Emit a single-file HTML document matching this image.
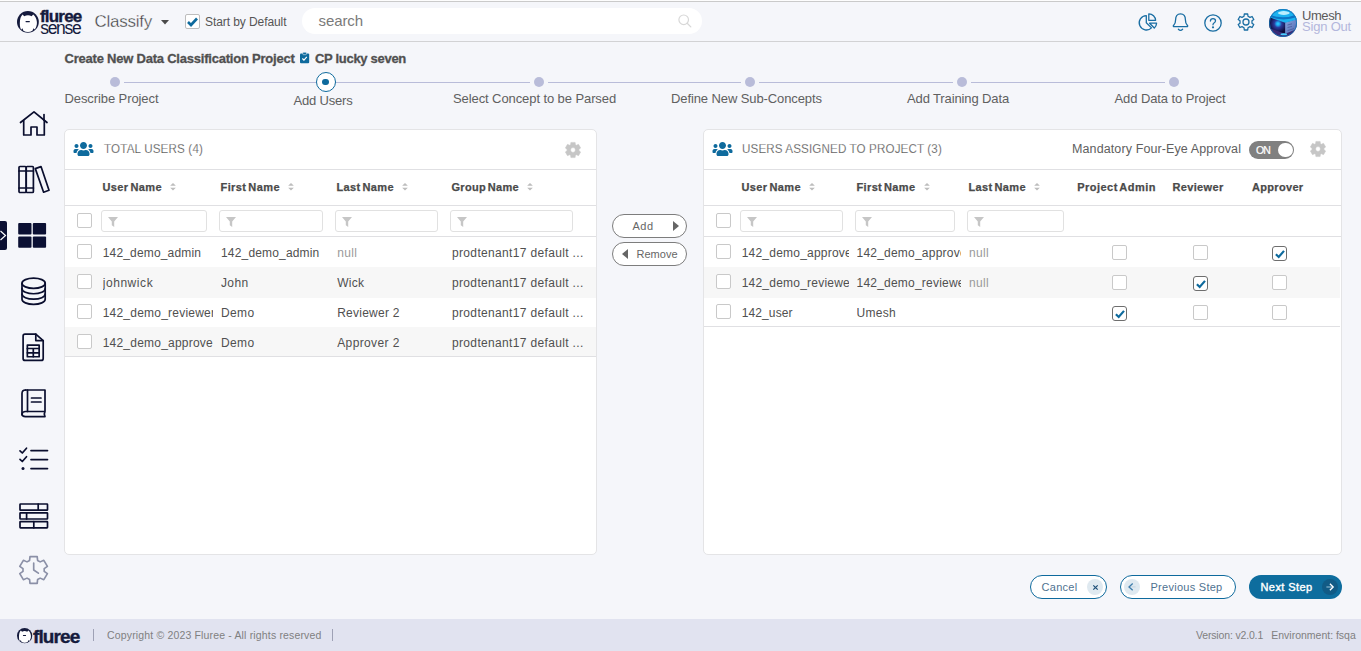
<!DOCTYPE html>
<html lang="en"><head><meta charset="utf-8"><title>Fluree Sense - Classify</title>
<style>
html,body{margin:0;padding:0}
body{width:1361px;height:651px;position:relative;overflow:hidden;background:#f5f6fa;font-family:"Liberation Sans",sans-serif}
.t{position:absolute;white-space:nowrap;line-height:20px}
.a{position:absolute}
svg{position:absolute;overflow:visible}
.panel{position:absolute;box-sizing:border-box;background:#fff;border:1px solid #e4e4e6;border-radius:5px}
.hl{position:absolute;height:1px;background:#e0e0e3}
.row{position:absolute;height:30px}
.alt{background:#f7f7f7}
.cb{position:absolute;box-sizing:border-box;width:15px;height:15px;border:1px solid #c9c9c9;border-radius:2px;background:#fff}
.cb.on{border:1.5px solid #6e6e6e;border-radius:3px}
.fi{position:absolute;box-sizing:border-box;height:22px;border:1px solid #e1e1e1;border-radius:3px;background:#fff}
.dot{position:absolute;width:10px;height:10px;border-radius:50%;background:#b9bcd9}
.sl{position:absolute;height:1px;top:82px;background:#b9bcd9}
.pill{position:absolute;box-sizing:border-box;height:24px;border-radius:12px;background:#fff}
.ic{stroke:#0a0e2e;fill:none;stroke-width:1.7;stroke-linecap:round;stroke-linejoin:round}
.hi{stroke:#1a6ea3;fill:none;stroke-width:1.3;stroke-linecap:round;stroke-linejoin:round}

</style></head>
<body>
<!-- header -->
<div class="a" style="left:0;top:0;width:1361px;height:1px;background:#fdfdfd"></div>
<div class="a" style="left:0;top:1px;width:1361px;height:1px;background:#cacaca"></div>
<div class="a" style="left:0;top:41px;width:1361px;height:1px;background:#d2d2d4"></div>
<!-- logo -->
<svg style="left:17px;top:11.3px" width="22" height="22" viewBox="0 0 22 22"><circle cx="10.9" cy="10.9" r="10.9" fill="#151b3d"/><path d="M3 9.5 C3.2 7 4.2 5.2 5.6 3.6 L7.2 5.2 C9.6 4 12.4 4 14.6 5.2 L16.2 3.6 C18.4 5.6 19.6 8 19.9 11 C20.2 14 19 17 17.6 18.6 L16.6 17.2 L15.4 19.8 C12.6 21.4 9.2 21.4 6.4 19.8 L5.4 17.2 L4.2 18.8 C2.8 17 2.6 13 3 9.5Z" fill="#fff"/><rect x="8.5" y="10" width="4.4" height="1.2" rx="0.4" fill="#151b3d"/></svg>
<!-- caret -->
<svg style="left:160.8px;top:19.8px" width="8" height="5" viewBox="0 0 8 5"><path d="M0 0H8L4 4.5Z" fill="#4a4a4a"/></svg>
<!-- start by default checkbox -->
<div class="cb" style="left:185px;top:14px;border-color:#bdbdbd"></div>
<svg style="left:187px;top:17px" width="11" height="9" viewBox="0 0 11 9"><path d="M1 5 L4 8 L10 1.5" fill="none" stroke="#0e6a9d" stroke-width="2.6"/></svg>
<!-- search -->
<div class="a" style="left:302px;top:8px;width:400px;height:26px;border-radius:13px;background:#fff"></div>
<svg style="left:678px;top:14.4px" width="14" height="14" viewBox="0 0 14 14"><circle cx="5.7" cy="5.8" r="4.8" fill="none" stroke="#d8d8d8" stroke-width="1.2"/><path d="M9.2 9.3L12.8 12.9" stroke="#d8d8d8" stroke-width="1.3" stroke-linecap="round"/></svg>
<!-- header icons -->
<svg style="left:1138px;top:13px" width="20" height="19" viewBox="0 0 20 19"><path class="hi" d="M8.3 2.6 A7.2 7.2 0 1 0 13.5 14.9 L8.3 9.8Z"/><path class="hi" d="M10.8 7.3 V0.8 A6.7 6.7 0 0 1 17.6 7.3Z"/><path class="hi" d="M11.6 10.2 H18.6 Q18.4 13 16.3 15Z"/></svg>
<svg style="left:1172px;top:13px" width="17" height="19" viewBox="0 0 17 19"><path class="hi" d="M8.5 0.9 C5 0.9 3.6 3.8 3.6 6.8 C3.6 9.8 2.9 11.2 1.7 12.3 Q0.9 13.1 1.7 13.7 H15.3 Q16.1 13.1 15.3 12.3 C14.1 11.2 13.4 9.8 13.4 6.8 C13.4 3.8 12 0.9 8.5 0.9Z"/><path class="hi" d="M6.4 16.2 Q8.5 18.4 10.6 16.2"/></svg>
<svg style="left:1203.8px;top:13.5px" width="18" height="18" viewBox="0 0 18 18"><circle class="hi" cx="9" cy="9" r="8.2"/><path class="hi" d="M6.4 7 Q6.5 4.6 9 4.6 Q11.5 4.6 11.5 6.8 Q11.5 8.2 10 9 Q9 9.6 9 10.8" stroke-width="1.8"/><circle cx="9" cy="13.3" r="1.1" fill="#1a6ea3"/></svg>
<svg style="left:1236.6px;top:13.2px" width="18" height="18" viewBox="0 0 18 18"><path class="hi" stroke-width="1.4" d="M10.99 3.23 L10.70 0.98 L7.30 0.98 L7.01 3.23 L5.00 4.40 L2.91 3.51 L1.20 6.47 L3.01 7.84 L3.01 10.16 L1.20 11.53 L2.91 14.49 L5.00 13.60 L7.01 14.77 L7.30 17.02 L10.70 17.02 L10.99 14.77 L13.00 13.60 L15.09 14.49 L16.80 11.53 L14.99 10.16 L14.99 7.84 L16.80 6.47 L15.09 3.51 L13.00 4.40Z"/><circle class="hi" stroke-width="1.4" cx="9" cy="9" r="3"/></svg>
<!-- avatar -->
<svg style="left:1269.1px;top:8.8px" width="28" height="28" viewBox="0 0 28 28"><defs><radialGradient id="avg" cx="9" cy="14.8" r="9" gradientUnits="userSpaceOnUse"><stop offset="0" stop-color="#2fd0ff"/><stop offset="0.18" stop-color="#1fa8f0"/><stop offset="0.42" stop-color="#2b3b9c"/><stop offset="1" stop-color="#0d0b3a"/></radialGradient><linearGradient id="avr" x1="0" y1="0" x2="1" y2="1"><stop offset="0" stop-color="#86a8e2"/><stop offset="1" stop-color="#5265ae"/></linearGradient><clipPath id="avc"><circle cx="14" cy="14" r="14"/></clipPath></defs><g clip-path="url(#avc)"><rect width="28" height="28" fill="#3a2a76"/><path d="M0 7 L16.2 13.4 V24.8 L0 19Z" fill="url(#avg)"/><path d="M16.2 13.4 L28 10 V20 L16.2 24.8Z" fill="url(#avr)"/><path d="M0 0 H28 V10.4 L16.2 13.8 L0 8.2Z" fill="#1cb2f0"/><path d="M0 5.5 Q14 11 28 5.5 V8 Q14 13 0 7.6Z" fill="#0d74c4"/><ellipse cx="14.8" cy="4" rx="5.8" ry="1.9" fill="#b9eefe"/><path d="M18.5 16 L23 14.8 M18.5 18.6 L23 17.4 M18.5 21.6 L25 19.6" stroke="#4a5a9c" stroke-width="0.8" fill="none"/><ellipse cx="14.8" cy="25.3" rx="3.3" ry="1" fill="#49d0ff"/></g><circle cx="14" cy="14" r="13.6" fill="none" stroke="#0e74b6" stroke-width="0.8"/></svg>
<!-- sidebar -->
<div class="a" style="left:0;top:221px;width:7px;height:29px;background:#0b1033;border-radius:0 2px 2px 0"></div>
<svg style="left:0;top:230px" width="7" height="11" viewBox="0 0 7 11"><path d="M0.5 1 L5.5 5.5 L0.5 10" fill="none" stroke="#fff" stroke-width="1.2"/></svg>
<svg style="left:19px;top:110px" width="30" height="27" viewBox="0 0 30 27"><path class="ic" d="M1.5 12.5 L15 1.8 L28 12.5"/><path class="ic" d="M25 10 V4.5"/><path class="ic" d="M4.7 10.5 V25 H12 V17 H18 V25 H25.3 V10.5"/></svg>
<svg style="left:18px;top:165px" width="32" height="29" viewBox="0 0 32 29"><rect class="ic" x="1" y="1.5" width="7.2" height="26" rx="1"/><rect class="ic" x="8.2" y="1.5" width="7.2" height="26" rx="1"/><path class="ic" d="M1 6 H15.4 M1 23 H15.4"/><path class="ic" d="M17.3 3.6 L23 1.6 L31 25.2 L25.6 27.2Z"/></svg>
<svg style="left:18px;top:223px" width="29" height="25" viewBox="0 0 29 25"><rect x="0.2" y="0" width="13.3" height="11.6" rx="1" fill="#0b1033"/><rect x="14.8" y="0" width="13.3" height="11.6" rx="1" fill="#0b1033"/><rect x="0.2" y="13.4" width="13.3" height="11.4" rx="1" fill="#0b1033"/><rect x="14.8" y="13.4" width="13.3" height="11.4" rx="1" fill="#0b1033"/></svg>
<svg style="left:21px;top:277px" width="26" height="29" viewBox="0 0 26 29"><ellipse class="ic" cx="12.6" cy="6.25" rx="11.6" ry="5.1"/><path class="ic" d="M1 6.25 V22.25 A11.6 5.1 0 0 0 24.2 22.25 V6.25"/><path class="ic" d="M1 11.65 A11.6 5.1 0 0 0 24.2 11.65"/><path class="ic" d="M1 17.05 A11.6 5.1 0 0 0 24.2 17.05"/></svg>
<svg style="left:22px;top:333px" width="23" height="29" viewBox="0 0 23 29"><path class="ic" d="M3 1.1 H13.8 L21.2 7.6 V25.4 Q21.2 27.4 19.2 27.4 H3.1 Q1.1 27.4 1.1 25.4 V3.1 Q1.1 1.1 3 1.1Z"/><path class="ic" d="M13.8 1.1 V7.6 H21.2"/><rect class="ic" x="5.35" y="12.05" width="11.8" height="11.7"/><path class="ic" stroke-width="1.5" d="M5.35 15.5 H17.15 M5.35 19.8 H17.15 M11.3 15.5 V23.75"/></svg>
<svg style="left:21px;top:389px" width="26" height="29" viewBox="0 0 26 29"><path class="ic" d="M4.5 1 H24 V22.5 H4.5 C2.5 22.5 1 24 1 25.3 C1 26.8 2.5 27.6 4.5 27.6 H24 Q22.6 25 24 22.5"/><path class="ic" d="M1 25.5 V4.5 C1 2.5 2.5 1 4.5 1"/><path class="ic" d="M6.5 1 V22.5"/><path class="ic" d="M10.5 9 H20 M10.5 13 H20"/></svg>
<svg style="left:18.5px;top:447px" width="30" height="24" viewBox="0 0 30 24"><path class="ic" d="M1 3.8 L3.3 6 L7.5 1.2 M1 12.3 L3.3 14.5 L7.5 9.7"/><path class="ic" d="M12 3.6 H28.5 M12 12.6 H28.5 M12 21.6 H28.5"/><circle cx="4" cy="21.6" r="1.5" fill="#0d1033"/></svg>
<svg style="left:18.5px;top:503px" width="30" height="26" viewBox="0 0 30 26"><rect class="ic" x="1" y="1" width="27.5" height="6.2" rx="0.5"/><rect class="ic" x="1" y="9.8" width="27.5" height="6.2" rx="0.5"/><rect class="ic" x="1" y="18.6" width="27.5" height="6.2" rx="0.5"/><path class="ic" d="M19.2 1 V7.2 M7.6 9.8 V16 M14.8 18.6 V24.8"/></svg>
<svg style="left:17.9px;top:555.3px" width="31.2" height="30" viewBox="0 0 30 30" preserveAspectRatio="none"><path d="M18.86 5.45 L18.46 1.64 L11.54 1.64 L11.14 5.45 L8.66 6.88 L5.16 5.33 L1.70 11.31 L4.80 13.57 L4.80 16.43 L1.70 18.69 L5.16 24.67 L8.66 23.12 L11.14 24.55 L11.54 28.36 L18.46 28.36 L18.86 24.55 L21.34 23.12 L24.84 24.67 L28.30 18.69 L25.20 16.43 L25.20 13.57 L28.30 11.31 L24.84 5.33 L21.34 6.88Z" fill="none" stroke="#8b90a7" stroke-width="1.6" stroke-linejoin="round"/><path d="M15.1 8 V15 L19.6 18.2" fill="none" stroke="#8b90a7" stroke-width="1.6" stroke-linecap="round" stroke-linejoin="round"/></svg>
<!-- title clipboard -->
<svg style="left:299.9px;top:52.2px" width="9.2" height="11.6" viewBox="0 0 10 12"><rect x="0" y="1.2" width="10" height="10.8" rx="1.2" fill="#0e6a9d"/><rect x="3" y="0" width="4" height="2.6" rx="0.8" fill="#0e6a9d" stroke="#f5f6fa" stroke-width="0.6"/><path d="M2.6 6.8 L4.3 8.5 L7.4 5" fill="none" stroke="#fff" stroke-width="1.3"/></svg>
<!-- stepper -->
<div class="sl" style="left:124px;width:192px"></div>
<div class="sl" style="left:335px;width:195px"></div>
<div class="sl" style="left:548px;width:193px"></div>
<div class="sl" style="left:759px;width:194px"></div>
<div class="sl" style="left:971px;width:194px"></div>
<div class="dot" style="left:110px;top:77px"></div>
<div class="dot" style="left:534px;top:77px"></div>
<div class="dot" style="left:745px;top:77px"></div>
<div class="dot" style="left:957px;top:77px"></div>
<div class="dot" style="left:1169px;top:77px"></div>
<div class="a" style="left:315.5px;top:72px;width:20px;height:20px;box-sizing:border-box;border:1.6px solid #0e6a9d;border-radius:50%;background:#fff"></div>
<div class="a" style="left:322.2px;top:78.7px;width:6.6px;height:6.6px;border-radius:50%;background:#0e6a9d"></div>
<div class="a" style="left:0;top:619px;width:1361px;height:32px;background:#e1e3f0"></div>
<svg style="left:16.6px;top:628.2px" width="15.4" height="15.4" viewBox="0 0 22 22"><circle cx="10.9" cy="10.9" r="10.9" fill="#151b3d"/><path d="M3 9.5 C3.2 7 4.2 5.2 5.6 3.6 L7.2 5.2 C9.6 4 12.4 4 14.6 5.2 L16.2 3.6 C18.4 5.6 19.6 8 19.9 11 C20.2 14 19 17 17.6 18.6 L16.6 17.2 L15.4 19.8 C12.6 21.4 9.2 21.4 6.4 19.8 L5.4 17.2 L4.2 18.8 C2.8 17 2.6 13 3 9.5Z" fill="#fff"/><rect x="8.5" y="10" width="4.4" height="1.3" rx="0.4" fill="#151b3d"/></svg>
<div class="a" style="left:93px;top:629px;width:1px;height:12px;background:#9ea1b5"></div>
<div class="a" style="left:332px;top:629px;width:1px;height:12px;background:#9ea1b5"></div>
<div class="panel" style="left:64px;top:129px;width:533px;height:426px"></div>
<div class="row alt" style="left:65px;top:267px;width:531px;height:30.8px"></div>
<div class="row alt" style="left:65px;top:327.3px;width:531px;height:28.7px"></div>
<div class="hl" style="left:65px;top:169px;width:531px"></div>
<div class="hl" style="left:65px;top:205px;width:531px"></div>
<div class="hl" style="left:65px;top:236px;width:531px"></div>
<div class="hl" style="left:65px;top:356px;width:531px"></div>
<svg style="left:73px;top:142px" width="21" height="14" viewBox="0 0 640 448"><path fill="#0e6a9d" d="M96 192c35.300 0 64-28.700 64-64s-28.700-64-64-64-64 28.700-64 64 28.700 64 64 64zm448 0c35.300 0 64-28.700 64-64s-28.700-64-64-64-64 28.700-64 64 28.700 64 64 64zm32 32h-64c-17.600 0-33.500 7.100-45.100 18.600 40.300 22.100 68.900 62 75.100 109.400h66c17.700 0 32-14.300 32-32v-32c0-35.300-28.700-64-64-64zm-256 0c61.900 0 112-50.100 112-112S381.900 0 320 0 208 50.100 208 112s50.100 112 112 112zm76.800 32h-8.300c-20.800 10-43.900 16-68.500 16s-47.600-6-68.500-16h-8.300C179.600 256 128 307.600 128 371.200V400c0 26.500 21.500 48 48 48h288c26.500 0 48-21.500 48-48v-28.800c0-63.600-51.600-115.200-115.200-115.200zm-223.700-13.400C161.500 231.100 145.600 224 128 224H64c-35.300 0-64 28.700-64 64v32c0 17.700 14.300 32 32 32h65.900c6.300-47.400 34.900-87.300 75.200-109.400z"/></svg>
<svg style="left:564.7px;top:141.9px" width="16" height="16" viewBox="0 0 16 16"><path fill="#c6c6c6" fill-rule="evenodd" stroke="#c6c6c6" stroke-width="0.5" stroke-linejoin="round" d="M10.49 2.65 L10.11 0.39 L5.89 0.39 L5.51 2.65 L4.62 3.17 L2.46 2.37 L0.35 6.02 L2.12 7.49 L2.12 8.51 L0.35 9.98 L2.46 13.63 L4.62 12.83 L5.51 13.35 L5.89 15.61 L10.11 15.61 L10.49 13.35 L11.38 12.83 L13.54 13.63 L15.65 9.98 L13.88 8.51 L13.88 7.49 L15.65 6.02 L13.54 2.37 L11.38 3.17Z M8 5.6 A2.4 2.4 0 1 0 8 10.4 A2.4 2.4 0 1 0 8 5.6Z"/></svg>
<svg style="left:170.2px;top:183.2px" width="6" height="7.6" viewBox="0 0 6 8"><path d="M0 3 L3 0 L6 3Z M0 5 L3 8 L6 5Z" fill="#bdbdbd"/></svg>
<svg style="left:288.2px;top:183.2px" width="6" height="7.6" viewBox="0 0 6 8"><path d="M0 3 L3 0 L6 3Z M0 5 L3 8 L6 5Z" fill="#bdbdbd"/></svg>
<svg style="left:402.2px;top:183.2px" width="6" height="7.6" viewBox="0 0 6 8"><path d="M0 3 L3 0 L6 3Z M0 5 L3 8 L6 5Z" fill="#bdbdbd"/></svg>
<svg style="left:527.2px;top:183.2px" width="6" height="7.6" viewBox="0 0 6 8"><path d="M0 3 L3 0 L6 3Z M0 5 L3 8 L6 5Z" fill="#bdbdbd"/></svg>
<div class="cb" style="left:77px;top:213px"></div>
<div class="fi" style="left:101px;top:210px;width:106px"></div>
<svg style="left:108px;top:217px" width="10" height="10" viewBox="0 0 10 10"><path d="M0 0 H10 L6.2 4.6 V10 L3.8 8.2 V4.6Z" fill="#c6c6c6"/></svg>
<div class="fi" style="left:219px;top:210px;width:104px"></div>
<svg style="left:226px;top:217px" width="10" height="10" viewBox="0 0 10 10"><path d="M0 0 H10 L6.2 4.6 V10 L3.8 8.2 V4.6Z" fill="#c6c6c6"/></svg>
<div class="fi" style="left:335px;top:210px;width:103px"></div>
<svg style="left:342px;top:217px" width="10" height="10" viewBox="0 0 10 10"><path d="M0 0 H10 L6.2 4.6 V10 L3.8 8.2 V4.6Z" fill="#c6c6c6"/></svg>
<div class="fi" style="left:450px;top:210px;width:123px"></div>
<svg style="left:457px;top:217px" width="10" height="10" viewBox="0 0 10 10"><path d="M0 0 H10 L6.2 4.6 V10 L3.8 8.2 V4.6Z" fill="#c6c6c6"/></svg>
<div class="cb" style="left:77px;top:244px"></div>
<div class="cb" style="left:77px;top:274px"></div>
<div class="cb" style="left:77px;top:304px"></div>
<div class="cb" style="left:77px;top:334px"></div>
<div class="panel" style="left:703px;top:129px;width:639px;height:426px"></div>
<div class="row alt" style="left:704px;top:267px;width:636px;height:30.8px"></div>
<div class="hl" style="left:704px;top:169px;width:637px"></div>
<div class="hl" style="left:704px;top:205px;width:637px"></div>
<div class="hl" style="left:704px;top:236px;width:637px"></div>
<div class="hl" style="left:704px;top:326px;width:636px"></div>
<svg style="left:712px;top:142px" width="21" height="14" viewBox="0 0 640 448"><path fill="#0e6a9d" d="M96 192c35.300 0 64-28.700 64-64s-28.700-64-64-64-64 28.700-64 64 28.700 64 64 64zm448 0c35.300 0 64-28.700 64-64s-28.700-64-64-64-64 28.700-64 64 28.700 64 64 64zm32 32h-64c-17.600 0-33.500 7.100-45.100 18.600 40.300 22.100 68.900 62 75.100 109.400h66c17.700 0 32-14.300 32-32v-32c0-35.300-28.700-64-64-64zm-256 0c61.900 0 112-50.100 112-112S381.900 0 320 0 208 50.100 208 112s50.100 112 112 112zm76.800 32h-8.300c-20.800 10-43.900 16-68.500 16s-47.600-6-68.500-16h-8.300C179.600 256 128 307.600 128 371.200V400c0 26.500 21.500 48 48 48h288c26.500 0 48-21.500 48-48v-28.800c0-63.600-51.600-115.200-115.200-115.200zm-223.700-13.400C161.500 231.100 145.600 224 128 224H64c-35.300 0-64 28.700-64 64v32c0 17.700 14.300 32 32 32h65.900c6.300-47.400 34.900-87.300 75.200-109.400z"/></svg>
<svg style="left:1310.1px;top:140.9px" width="16" height="16" viewBox="0 0 16 16"><path fill="#c6c6c6" fill-rule="evenodd" stroke="#c6c6c6" stroke-width="0.5" stroke-linejoin="round" d="M10.49 2.65 L10.11 0.39 L5.89 0.39 L5.51 2.65 L4.62 3.17 L2.46 2.37 L0.35 6.02 L2.12 7.49 L2.12 8.51 L0.35 9.98 L2.46 13.63 L4.62 12.83 L5.51 13.35 L5.89 15.61 L10.11 15.61 L10.49 13.35 L11.38 12.83 L13.54 13.63 L15.65 9.98 L13.88 8.51 L13.88 7.49 L15.65 6.02 L13.54 2.37 L11.38 3.17Z M8 5.6 A2.4 2.4 0 1 0 8 10.4 A2.4 2.4 0 1 0 8 5.6Z"/></svg>
<div class="a" style="left:1249px;top:141px;width:45px;height:18px;border-radius:9px;background:#808080"></div>
<div class="a" style="left:1277.8px;top:142.7px;width:14.8px;height:14.8px;border-radius:50%;background:#fff"></div>
<svg style="left:809.4px;top:183.2px" width="6" height="7.6" viewBox="0 0 6 8"><path d="M0 3 L3 0 L6 3Z M0 5 L3 8 L6 5Z" fill="#bdbdbd"/></svg>
<svg style="left:924.4px;top:183.2px" width="6" height="7.6" viewBox="0 0 6 8"><path d="M0 3 L3 0 L6 3Z M0 5 L3 8 L6 5Z" fill="#bdbdbd"/></svg>
<svg style="left:1034.3px;top:183.2px" width="6" height="7.6" viewBox="0 0 6 8"><path d="M0 3 L3 0 L6 3Z M0 5 L3 8 L6 5Z" fill="#bdbdbd"/></svg>
<div class="cb" style="left:716px;top:213px"></div>
<div class="fi" style="left:740px;top:210px;width:103px"></div>
<svg style="left:747px;top:217px" width="10" height="10" viewBox="0 0 10 10"><path d="M0 0 H10 L6.2 4.6 V10 L3.8 8.2 V4.6Z" fill="#c6c6c6"/></svg>
<div class="fi" style="left:855px;top:210px;width:100px"></div>
<svg style="left:862px;top:217px" width="10" height="10" viewBox="0 0 10 10"><path d="M0 0 H10 L6.2 4.6 V10 L3.8 8.2 V4.6Z" fill="#c6c6c6"/></svg>
<div class="fi" style="left:967px;top:210px;width:97px"></div>
<svg style="left:974px;top:217px" width="10" height="10" viewBox="0 0 10 10"><path d="M0 0 H10 L6.2 4.6 V10 L3.8 8.2 V4.6Z" fill="#c6c6c6"/></svg>
<div class="cb" style="left:716px;top:244px"></div>
<div class="cb" style="left:1112px;top:245px"></div>
<div class="cb" style="left:1193px;top:245px"></div>
<div class="cb on" style="left:1272px;top:246px"></div>
<svg style="left:1274.5px;top:249.6px" width="10" height="8" viewBox="0 0 10 8"><path d="M0.9 4.3 L3.7 7 L9 0.9" fill="none" stroke="#0e6a9d" stroke-width="2.2"/></svg>
<div class="cb" style="left:716px;top:274px"></div>
<div class="cb" style="left:1112px;top:275px"></div>
<div class="cb on" style="left:1193px;top:276px"></div>
<svg style="left:1195.5px;top:279.6px" width="10" height="8" viewBox="0 0 10 8"><path d="M0.9 4.3 L3.7 7 L9 0.9" fill="none" stroke="#0e6a9d" stroke-width="2.2"/></svg>
<div class="cb" style="left:1272px;top:275px"></div>
<div class="cb" style="left:716px;top:304px"></div>
<div class="cb on" style="left:1112px;top:306px"></div>
<svg style="left:1114.5px;top:309.6px" width="10" height="8" viewBox="0 0 10 8"><path d="M0.9 4.3 L3.7 7 L9 0.9" fill="none" stroke="#0e6a9d" stroke-width="2.2"/></svg>
<div class="cb" style="left:1193px;top:305px"></div>
<div class="cb" style="left:1272px;top:305px"></div>
<div class="pill" style="left:612px;top:214px;width:75px;border:1px solid #7d7d7d"></div>
<div class="pill" style="left:612px;top:242px;width:75px;border:1px solid #7d7d7d"></div>
<svg style="left:673px;top:221px" width="6" height="10" viewBox="0 0 6 10"><path d="M0 0 L6 5 L0 10Z" fill="#666"/></svg>
<svg style="left:622px;top:249px" width="6" height="10" viewBox="0 0 6 10"><path d="M6 0 L0 5 L6 10Z" fill="#666"/></svg>
<div class="pill" style="left:1030px;top:575px;width:77px;border:1.3px solid #0e6a9d"></div>
<div class="a" style="left:1087px;top:579px;width:16px;height:16px;border-radius:50%;background:#dfe9f0"></div>
<svg style="left:1092.5px;top:584.5px" width="5" height="5" viewBox="0 0 5 5"><path d="M0.3 0.3 L4.7 4.7 M4.7 0.3 L0.3 4.7" stroke="#1d4f78" stroke-width="1.2"/></svg>
<div class="pill" style="left:1120px;top:575px;width:116px;border:1.3px solid #0e6a9d"></div>
<div class="a" style="left:1124px;top:579px;width:16px;height:16px;border-radius:50%;background:#dfe9f0"></div>
<svg style="left:1128.4px;top:583px" width="9" height="8" viewBox="0 0 9 8"><path d="M1 3.9 H7.6" fill="none" stroke="#c5d5e0" stroke-width="1"/><path d="M4.7 0.6 L1 3.9 L4.7 7.2" fill="none" stroke="#3f7dab" stroke-width="1.3"/></svg>
<div class="pill" style="left:1249px;top:575px;width:93px;background:#0e6d9e"></div>
<div class="a" style="left:1322px;top:579px;width:16px;height:16px;border-radius:50%;background:#115b86"></div>
<svg style="left:1326px;top:583px" width="8" height="8" viewBox="0 0 8 8"><path d="M0.4 4 H6.6" fill="none" stroke="#86b4cb" stroke-width="1.2"/><path d="M3.9 0.7 L7.2 4 L3.9 7.3" fill="none" stroke="#fff" stroke-width="1.3"/></svg>
<span class="t" style="left:94.5px;top:11.5px;font-size:17px;color:#3c3c3c;letter-spacing:-0.25px;-webkit-text-stroke:0.35px #f5f6fa;">Classify</span>
<span class="t" style="left:205px;top:11.8px;font-size:12px;color:#555;letter-spacing:-0.08px;">Start by Default</span>
<span class="t" style="left:318.5px;top:10.8px;font-size:15px;color:#7a7a7a;letter-spacing:-0.09px;">search</span>
<span class="t" style="left:1302px;top:5.5px;font-size:13px;color:#5a5a5a;letter-spacing:-0.44px;">Umesh</span>
<span class="t" style="left:1302px;top:17.3px;font-size:13px;color:#b3b7dc;letter-spacing:-0.2px;">Sign Out</span>
<span class="t" style="left:64.5px;top:49px;font-size:13px;font-weight:700;color:#505050;letter-spacing:-0.22px;-webkit-text-stroke:0.3px currentColor;">Create New Data Classification Project</span>
<span class="t" style="left:315px;top:49px;font-size:13px;font-weight:700;color:#505050;letter-spacing:-0.3px;-webkit-text-stroke:0.3px currentColor;">CP lucky seven</span>
<span class="t" style="left:64.5px;top:88.8px;font-size:13px;color:#606060;letter-spacing:-0.09px;">Describe Project</span>
<span class="t" style="left:293.5px;top:90.8px;font-size:13px;color:#606060;letter-spacing:-0.19px;">Add Users</span>
<span class="t" style="left:453px;top:88.8px;font-size:13px;color:#606060;letter-spacing:-0.09px;">Select Concept to be Parsed</span>
<span class="t" style="left:671px;top:88.8px;font-size:13px;color:#606060;letter-spacing:-0.1px;">Define New Sub-Concepts</span>
<span class="t" style="left:907px;top:88.8px;font-size:13px;color:#606060;letter-spacing:-0.12px;">Add Training Data</span>
<span class="t" style="left:1114.5px;top:88.8px;font-size:13px;color:#606060;letter-spacing:-0.09px;">Add Data to Project</span>
<span class="t" style="left:103.5px;top:138.7px;font-size:12.5px;color:#484848;letter-spacing:0.17px;-webkit-text-stroke:0.25px #fff;transform:scaleX(0.93);transform-origin:0 50%;">TOTAL USERS (4)</span>
<span class="t" style="left:102.5px;top:177.2px;font-size:11px;font-weight:700;color:#4a4a4a;letter-spacing:0.39px;-webkit-text-stroke:0.25px currentColor;word-spacing:-1.5px;">User Name</span>
<span class="t" style="left:220.5px;top:177.2px;font-size:11px;font-weight:700;color:#4a4a4a;letter-spacing:0.41px;-webkit-text-stroke:0.25px currentColor;word-spacing:-1.5px;">First Name</span>
<span class="t" style="left:336.5px;top:177.2px;font-size:11px;font-weight:700;color:#4a4a4a;letter-spacing:0.37px;-webkit-text-stroke:0.25px currentColor;word-spacing:-1.5px;">Last Name</span>
<span class="t" style="left:451.5px;top:177.2px;font-size:11px;font-weight:700;color:#4a4a4a;letter-spacing:0.3px;-webkit-text-stroke:0.25px currentColor;word-spacing:-1.5px;">Group Name</span>
<span class="t" style="left:102.7px;top:242.6px;font-size:12px;color:#505050;letter-spacing:0.17px;width:110px;overflow:hidden;">142_demo_admin</span>
<span class="t" style="left:221px;top:242.6px;font-size:12px;color:#505050;letter-spacing:0.17px;width:108px;overflow:hidden;">142_demo_admin</span>
<span class="t" style="left:337.2px;top:242.6px;font-size:12px;color:#9a9a9a;letter-spacing:0.33px;width:108px;overflow:hidden;">null</span>
<span class="t" style="left:452px;top:242.6px;font-size:12px;color:#505050;letter-spacing:0.34px;">prodtenant17 default ...</span>
<span class="t" style="left:102.7px;top:272.6px;font-size:12px;color:#505050;letter-spacing:0.56px;width:110px;overflow:hidden;">johnwick</span>
<span class="t" style="left:221px;top:272.6px;font-size:12px;color:#505050;letter-spacing:0.37px;width:108px;overflow:hidden;">John</span>
<span class="t" style="left:337.2px;top:272.6px;font-size:12px;color:#505050;letter-spacing:0.25px;width:108px;overflow:hidden;">Wick</span>
<span class="t" style="left:452px;top:272.6px;font-size:12px;color:#505050;letter-spacing:0.34px;">prodtenant17 default ...</span>
<span class="t" style="left:102.7px;top:302.6px;font-size:12px;color:#505050;letter-spacing:0.22px;width:110px;overflow:hidden;">142_demo_reviewer</span>
<span class="t" style="left:221px;top:302.6px;font-size:12px;color:#505050;letter-spacing:0.37px;width:108px;overflow:hidden;">Demo</span>
<span class="t" style="left:337.2px;top:302.6px;font-size:12px;color:#505050;letter-spacing:0.25px;width:108px;overflow:hidden;">Reviewer 2</span>
<span class="t" style="left:452px;top:302.6px;font-size:12px;color:#505050;letter-spacing:0.34px;">prodtenant17 default ...</span>
<span class="t" style="left:102.7px;top:332.6px;font-size:12px;color:#505050;letter-spacing:0.22px;width:110px;overflow:hidden;">142_demo_approver</span>
<span class="t" style="left:221px;top:332.6px;font-size:12px;color:#505050;letter-spacing:0.37px;width:108px;overflow:hidden;">Demo</span>
<span class="t" style="left:337.2px;top:332.6px;font-size:12px;color:#505050;letter-spacing:0.38px;width:108px;overflow:hidden;">Approver 2</span>
<span class="t" style="left:452px;top:332.6px;font-size:12px;color:#505050;letter-spacing:0.34px;">prodtenant17 default ...</span>
<span class="t" style="left:742px;top:138.7px;font-size:12.5px;color:#484848;letter-spacing:0.13px;-webkit-text-stroke:0.25px #fff;transform:scaleX(0.93);transform-origin:0 50%;">USERS ASSIGNED TO PROJECT (3)</span>
<span class="t" style="left:1072px;top:139px;font-size:12.5px;color:#606060;letter-spacing:0.11px;">Mandatory Four-Eye Approval</span>
<span class="t" style="left:1256px;top:140px;font-size:10.5px;color:#fff;letter-spacing:-0.88px;-webkit-text-stroke:0.2px #fff;">ON</span>
<span class="t" style="left:741.5px;top:177.2px;font-size:11px;font-weight:700;color:#4a4a4a;letter-spacing:0.39px;-webkit-text-stroke:0.25px currentColor;word-spacing:-1.5px;">User Name</span>
<span class="t" style="left:856.5px;top:177.2px;font-size:11px;font-weight:700;color:#4a4a4a;letter-spacing:0.36px;-webkit-text-stroke:0.25px currentColor;word-spacing:-1.5px;">First Name</span>
<span class="t" style="left:968.5px;top:177.2px;font-size:11px;font-weight:700;color:#4a4a4a;letter-spacing:0.37px;-webkit-text-stroke:0.25px currentColor;word-spacing:-1.5px;">Last Name</span>
<span class="t" style="left:1077.3px;top:177.2px;font-size:11px;font-weight:700;color:#4a4a4a;letter-spacing:0.45px;-webkit-text-stroke:0.25px currentColor;word-spacing:-1.5px;">Project Admin</span>
<span class="t" style="left:1172.5px;top:177.2px;font-size:11px;font-weight:700;color:#4a4a4a;letter-spacing:0.34px;-webkit-text-stroke:0.25px currentColor;word-spacing:-1.5px;">Reviewer</span>
<span class="t" style="left:1252px;top:177.2px;font-size:11px;font-weight:700;color:#4a4a4a;letter-spacing:0.32px;-webkit-text-stroke:0.25px currentColor;word-spacing:-1.5px;">Approver</span>
<span class="t" style="left:741.7px;top:242.6px;font-size:12px;color:#505050;letter-spacing:0.22px;width:107.2px;overflow:hidden;">142_demo_approver</span>
<span class="t" style="left:856.5px;top:242.6px;font-size:12px;color:#505050;letter-spacing:0.22px;width:104.8px;overflow:hidden;">142_demo_approver</span>
<span class="t" style="left:968.9px;top:242.6px;font-size:12px;color:#9a9a9a;letter-spacing:0.33px;">null</span>
<span class="t" style="left:741.7px;top:272.6px;font-size:12px;color:#505050;letter-spacing:0.22px;width:107.2px;overflow:hidden;">142_demo_reviewer</span>
<span class="t" style="left:856.5px;top:272.6px;font-size:12px;color:#505050;letter-spacing:0.22px;width:104.8px;overflow:hidden;">142_demo_reviewer</span>
<span class="t" style="left:968.9px;top:272.6px;font-size:12px;color:#9a9a9a;letter-spacing:0.33px;">null</span>
<span class="t" style="left:741.7px;top:302.6px;font-size:12px;color:#505050;letter-spacing:0.12px;width:107.2px;overflow:hidden;">142_user</span>
<span class="t" style="left:856.5px;top:302.6px;font-size:12px;color:#505050;letter-spacing:0.3px;width:104.8px;overflow:hidden;">Umesh</span>
<span class="t" style="left:632.5px;top:216.3px;font-size:11px;color:#666;letter-spacing:0.47px;">Add</span>
<span class="t" style="left:636.5px;top:244.3px;font-size:11px;color:#666;letter-spacing:0.01px;">Remove</span>
<span class="t" style="left:1041.5px;top:577.1px;font-size:11px;color:#4f7291;letter-spacing:0.29px;">Cancel</span>
<span class="t" style="left:1150.5px;top:577.1px;font-size:11px;color:#4f7291;letter-spacing:0.27px;">Previous Step</span>
<span class="t" style="left:1260.5px;top:577.1px;font-size:11px;color:#fff;letter-spacing:0.41px;-webkit-text-stroke:0.4px #fff;">Next Step</span>
<span class="t" style="left:33px;top:627px;font-size:19px;font-weight:700;color:#151b3d;letter-spacing:-0.88px;-webkit-text-stroke:0.4px #151b3d;">fluree</span>
<span class="t" style="left:107px;top:624.8px;font-size:10.5px;color:#808080;letter-spacing:0.16px;">Copyright &copy; 2023 Fluree - All rights reserved</span>
<span class="t" style="left:1196px;top:625px;font-size:10.5px;color:#808080;letter-spacing:-0.16px;">Version: v2.0.1</span>
<span class="t" style="left:1271.3px;top:625px;font-size:10.5px;color:#808080;letter-spacing:-0.01px;">Environment: fsqa</span>
<span class="t" style="left:40px;top:7px;font-size:17px;font-weight:700;color:#151b3d;letter-spacing:-0.8px;-webkit-text-stroke:0.4px #151b3d;">fluree</span>
<span class="t" style="left:40.3px;top:18.3px;font-size:17.5px;color:#151b3d;letter-spacing:-1.34px;">sense</span>
</body></html>
